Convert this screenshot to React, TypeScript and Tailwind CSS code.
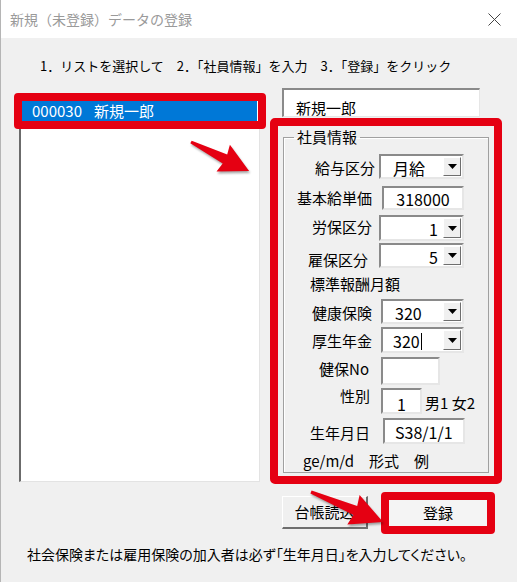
import type { ReactNode } from "react";

// sunken 3D edge used by the VBA-style text boxes / combos
const SUNKEN =
  "border-2 border-t-[#8a8a8a] border-l-[#8a8a8a] border-r-[#e6e6e6] border-b-[#e6e6e6] bg-white";

function Caret() {
  return (
    <span className="m-[1px] flex w-[18px] shrink-0 items-center justify-center self-stretch border border-t-white border-l-white border-r-[#6e6e6e] border-b-[#6e6e6e] bg-[#f0f0f0]">
      <svg width="9" height="5" viewBox="0 0 9 5">
        <path d="M0 0h9L4.5 5z" fill="#000" />
      </svg>
    </span>
  );
}

function Combo({ className, children }: { className: string; children?: ReactNode }) {
  return (
    <div className={`flex h-full ${SUNKEN} ${className}`}>
      <div className="flex min-w-0 flex-1 items-center pt-[2px] text-[16px] leading-none">{children}</div>
      <Caret />
    </div>
  );
}

function TextBox({ className, children }: { className: string; children?: ReactNode }) {
  return (
    <div className={`flex h-full items-center pt-[2px] text-[16px] leading-none ${SUNKEN} ${className}`}>
      {children}
    </div>
  );
}

export default function App() {
  return (
    <div className="relative h-[582px] w-[517px] overflow-hidden border-l border-[#b5b5b5] bg-[#f0f0f0] font-['Noto_Sans_CJK_JP',sans-serif] text-black">
      {/* title bar */}
      <div className="flex h-[38px] items-center justify-between bg-white pl-[9px] pr-[16px]">
        <span className="text-[14px] text-[#9a9a9a]">新規（未登録）データの登録</span>
        <svg width="13" height="13" viewBox="0 0 13 13" className="text-[#444]">
          <path d="M0.5 0.5l12 12M12.5 0.5l-12 12" stroke="currentColor" strokeWidth="1" />
        </svg>
      </div>

      {/* steps */}
      <div className="pl-[39px] pt-[18px] text-[13px] leading-[20px]">
        1．リストを選択して　2．「社員情報」を入力　3．「登録」をクリック
      </div>

      {/* list + form */}
      <div className="mt-[12px] flex gap-[10px] pl-[18px]">
        {/* list box */}
        <div className="relative mt-[6px] h-[388px] w-[241px] border-t-2 border-l-2 border-r border-b border-t-[#6b6b6b] border-l-[#6b6b6b] border-r-[#e3e3e3] border-b-[#e3e3e3] bg-white">
          <div className="ml-[-1px] mt-[5px] flex h-[20px] w-[237px] items-center bg-[#0078d7] pl-[12px] text-[15px] text-white">
            <span>000030</span>
            <span className="ml-[12px]">新規一郎</span>
          </div>
          <div className="absolute left-[-7px] top-[-3px] h-[36px] w-[252px] rounded-[4px] border-[8px] border-[#e50012]" />
        </div>

        {/* right column */}
        <div className="flex w-[232px] flex-col">
          <div className="ml-[12px] flex h-[29px] w-[198px] items-center border-t-2 border-l-2 border-r border-b border-t-[#8a8a8a] border-l-[#8a8a8a] border-r-[#e6e6e6] border-b-[#e6e6e6] bg-white pl-[12px] pt-[9px] text-[15px] leading-none">
            新規一郎
          </div>

          <div className="mt-[1px] flex h-[366px] flex-col rounded-[5px] border-[8px] border-[#e50012] px-[5px] pb-[3px] pt-[1px]">
            <fieldset className="m-0 min-w-0 flex-1 border border-[#a0a0a0] p-0 text-[15px] shadow-[inset_1px_1px_0_#fff]">
              <legend className="ml-[10px] px-[3px] leading-[20px]">社員情報</legend>

              <div className="mt-[7px] flex h-[25px] items-start">
                <span className="mt-[4px] w-[91px] text-right leading-[20px]">給与区分</span>
                <Combo className="ml-[4px] w-[85px]">
                  <span className="pl-[12px]">月給</span>
                </Combo>
              </div>

              <div className="mt-[7px] flex h-[24px] items-start">
                <span className="mt-[2px] w-[88px] text-right leading-[20px]">基本給単価</span>
                <TextBox className="ml-[10px] w-[82px] justify-center">318000</TextBox>
              </div>

              <div className="mt-[5px] flex h-[26px] items-start">
                <span className="mt-[2px] w-[88px] text-right leading-[20px]">労保区分</span>
                <Combo className="ml-[7px] w-[85px] justify-end">
                  <span className="ml-auto pr-[4px]">1</span>
                </Combo>
              </div>

              <div className="mt-[2px] flex h-[25px] items-start">
                <span className="mt-[7px] w-[84px] text-right leading-[20px]">雇保区分</span>
                <Combo className="ml-[11px] w-[85px]">
                  <span className="ml-auto pr-[4px]">5</span>
                </Combo>
              </div>

              <div className="mt-[6px] h-[20px] pl-[26px] leading-[20px]">標準報酬月額</div>

              <div className="mt-[5px] flex h-[25px] items-start">
                <span className="mt-[4px] w-[88px] text-right leading-[20px]">健康保険</span>
                <Combo className="ml-[9px] w-[83px]">
                  <span className="pl-[12px]">320</span>
                </Combo>
              </div>

              <div className="mt-[3px] flex h-[26px] items-start">
                <span className="mt-[4px] w-[88px] text-right leading-[20px]">厚生年金</span>
                <Combo className="ml-[9px] w-[83px]">
                  <span className="pl-[10px]">320</span>
                  <span className="ml-[1px] h-[17px] w-px bg-black" />
                </Combo>
              </div>

              <div className="mt-[4px] flex h-[28px] items-start">
                <span className="mt-[2px] w-[85px] text-right leading-[20px]">健保No</span>
                <TextBox className="ml-[12px] w-[59px]" />
              </div>

              <div className="mt-[3px] flex h-[26px] items-start">
                <span className="mt-[-2px] w-[86px] text-right leading-[20px]">性別</span>
                <TextBox className="ml-[11px] w-[41px] justify-center pt-[6px]">1</TextBox>
                <span className="ml-[3px] mt-[5px] leading-[20px]">男1 女2</span>
              </div>

              <div className="mt-[4px] flex h-[26px] items-start">
                <span className="mt-[5px] w-[86px] text-right leading-[20px]">生年月日</span>
                <TextBox className="ml-[13px] w-[82px] pl-[10px]">S38/1/1</TextBox>
              </div>

              <div className="mt-[7px] h-[20px] pl-[19px] leading-[20px]">ge/m/d　形式　例</div>
            </fieldset>
          </div>
        </div>
      </div>

      {/* buttons */}
      <div className="mt-[8px] flex justify-end gap-[13px] pr-[22px] text-[15px]">
        <div className="mt-[4px] flex h-[33px] w-[86px] items-center justify-center border-t border-l border-r-2 border-b-2 border-t-white border-l-white border-r-[#6e6e6e] border-b-[#6e6e6e] bg-[#f0f0f0]">
          台帳読込
        </div>
        <div className="flex h-[42px] w-[114px] items-center justify-center rounded-[4px] border-[8px] border-[#e50012] bg-[#f4f4f4]">
          登録
        </div>
      </div>

      {/* note */}
      <div className="mt-[10px] pl-[26px] text-[14px] leading-[20px] [font-feature-settings:'palt']">
        社会保険または雇用保険の加入者は必ず「生年月日」を入力してください。
      </div>

      {/* annotation arrows */}
      <svg
        className="pointer-events-none absolute left-0 top-0 drop-shadow-[1px_2px_1px_rgba(0,0,0,0.35)]"
        width="517"
        height="582"
        viewBox="0 0 517 582"
      >
        <polygon
          points="190.7,140.7 226.2,154.5 228.9,144.7 248.1,171.1 215.5,171.5 221.7,163.5 189.3,143.3"
          fill="#e50012"
        />
        <polygon
          points="310.6,490.6 356.2,505.9 358.6,494.9 382,522 346.3,524.5 352.4,515.1 309.4,493.4"
          fill="#e50012"
        />
      </svg>
    </div>
  );
}
